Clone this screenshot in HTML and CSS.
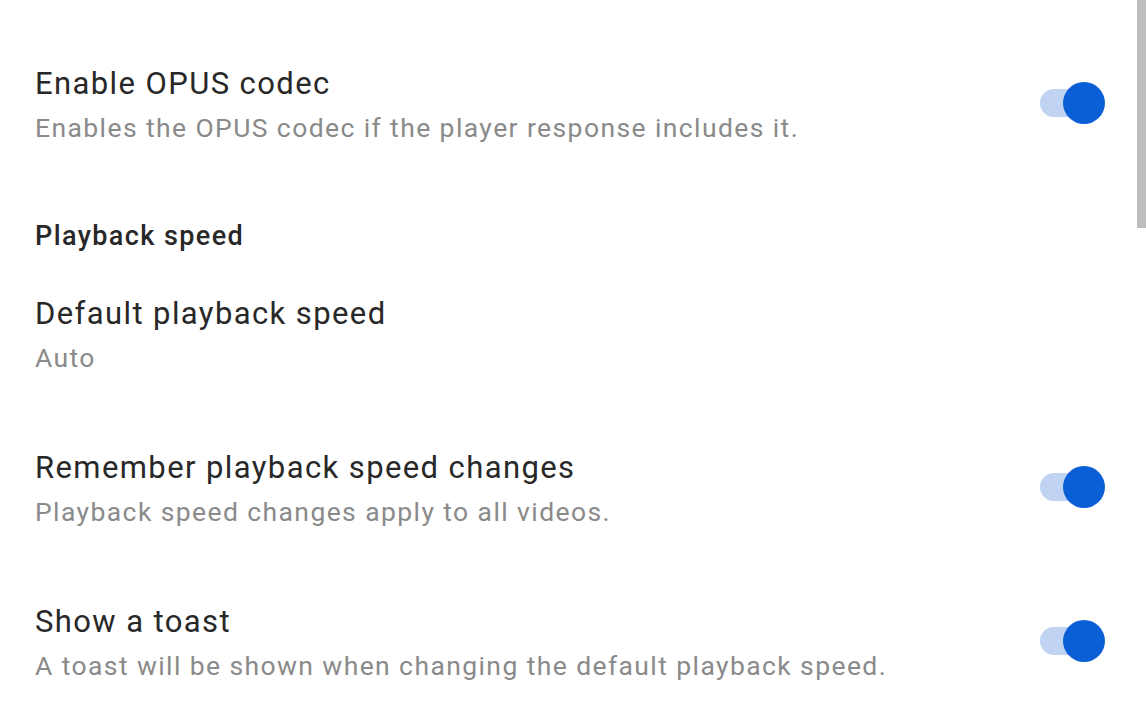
FILE: index.html
```html
<!DOCTYPE html>
<html lang="en">
<head>
    <meta charset="UTF-8">
    <meta name="viewport" content="width=device-width, initial-scale=1.0">
    <title>Playback settings</title>
    <link rel="stylesheet" href="styles.css">
</head>
<body>
    <div class="scrollbar"></div>
    <div class="settings">
        <div class="pref">
            <div class="pref-text">
                <div class="pref-title">Enable OPUS codec</div>
                <div class="pref-summary">Enables the OPUS codec if the player response includes it.</div>
            </div>
            <div class="switch on"><span class="thumb"></span></div>
        </div>

        <div class="category">Playback speed</div>

        <div class="pref">
            <div class="pref-text">
                <div class="pref-title">Default playback speed</div>
                <div class="pref-summary">Auto</div>
            </div>
        </div>

        <div class="pref">
            <div class="pref-text">
                <div class="pref-title">Remember playback speed changes</div>
                <div class="pref-summary">Playback speed changes apply to all videos.</div>
            </div>
            <div class="switch on"><span class="thumb"></span></div>
        </div>

        <div class="pref">
            <div class="pref-text">
                <div class="pref-title">Show a toast</div>
                <div class="pref-summary">A toast will be shown when changing the default playback speed.</div>
            </div>
            <div class="switch on"><span class="thumb"></span></div>
        </div>
    </div>
</body>
</html>
```

FILE: styles.css
```css
body {
    margin: 0;
    background: #fff;
    font-family: Roboto, "Noto Sans", sans-serif;
    color: #262626;
    overflow: hidden;
}
.scrollbar {
    position: fixed;
    top: 0;
    right: 0;
    width: 9px;
    height: 228px;
    background-color: #bdbdbd;
}
.settings {
    padding: 64px 41px 0 35px;
}
.pref {
    display: flex;
    justify-content: space-between;
    align-items: flex-start;
    height: 154px;
}
.pref:last-child {
    height: auto;
}
.pref-title {
    font-size: 31px;
    line-height: 40px;
    letter-spacing: 1.4px;
    color: #282828;
}
.pref-summary {
    margin-top: 6px;
    font-size: 26.5px;
    line-height: 36px;
    letter-spacing: 1.4px;
    color: #8a8a8a;
}
.category {
    height: 76px;
    font-size: 27px;
    line-height: 36px;
    font-weight: 500;
    letter-spacing: 1.4px;
    color: #282828;
}
.switch {
    position: relative;
    width: 65px;
    height: 42px;
    margin-top: 18px;
}
.switch::before {
    content: "";
    position: absolute;
    left: 0;
    top: 7px;
    width: 50px;
    height: 28px;
    border-radius: 14px;
    background-color: #c0d3f3;
}
.switch .thumb {
    position: absolute;
    right: 0;
    top: 0;
    width: 42px;
    height: 42px;
    border-radius: 50%;
    background-color: #0b5fd6;
}
```
